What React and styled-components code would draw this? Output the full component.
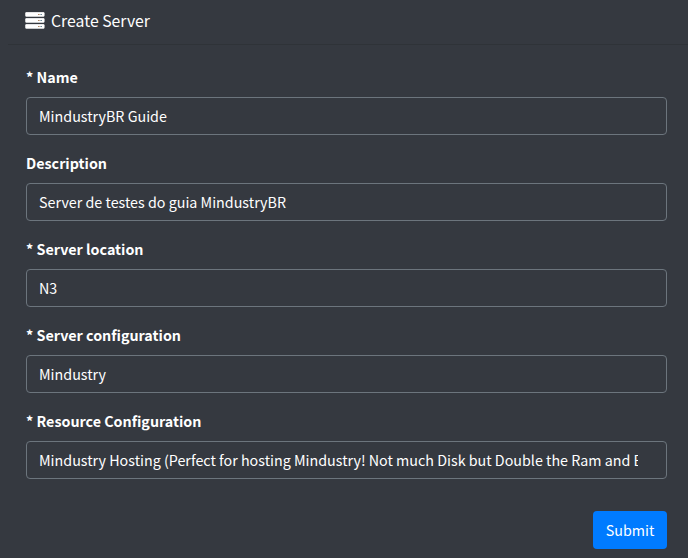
import React from "react";
import styled, { createGlobalStyle } from "styled-components";

const Global = createGlobalStyle`
  * { box-sizing: border-box; }
  body {
    margin: 0;
    background: #353940;
    color: #fff;
    font-family: "Source Sans Pro", "Noto Sans CJK SC", sans-serif;
    font-size: 14.3px;
    overflow: hidden;
  }
`;

const Card = styled.section`
  width: 680px;
  height: 558px;
  margin-left: 8px;
  background: #353940;
`;

const Header = styled.header`
  height: 45px;
  padding: 0 18px 0 17px;
  display: flex;
  align-items: flex-start;
  border-bottom: 1px solid #2f3338;
`;

const ServerIcon = styled.svg`
  width: 20px;
  height: 18px;
  margin-top: 12px;
  margin-right: 6px;
  flex: none;
`;

const Title = styled.h3`
  margin: 8px 0 0;
  font-size: 15.8px;
  line-height: 26px;
  font-weight: 400;
`;

const Form = styled.form`
  padding: 20px 21px 0 18px;
`;

const Field = styled.div`
  margin-bottom: 16px;
`;

const Label = styled.label`
  display: block;
  height: 24px;
  margin-bottom: 8px;
  line-height: 24px;
  font-weight: 700;
`;

const Input = styled.input`
  display: block;
  width: 100%;
  height: 38px;
  padding: 0 ${(p) => (p.$select ? 28 : 12)}px 2px 12px;
  border: 1px solid #6c757d;
  border-radius: 4px;
  background: #353940;
  color: #fff;
  font: inherit;
  outline: none;
`;

const Footer = styled.footer`
  display: flex;
  justify-content: flex-end;
  margin-top: 32px;
`;

const Submit = styled.button`
  width: 74px;
  height: 38px;
  padding: 0 0 2px;
  border: 0;
  border-radius: 4px;
  background: #007bff;
  color: #fff;
  font: inherit;
`;

const fields = [
  { label: "* Name", value: "MindustryBR Guide" },
  { label: "Description", value: "Server de testes do guia MindustryBR" },
  { label: "* Server location", value: "N3", select: true },
  { label: "* Server configuration", value: "Mindustry", select: true },
  {
    label: "* Resource Configuration",
    value: "Mindustry Hosting (Perfect for hosting Mindustry! Not much Disk but Double the Ram and Better CPU)",
    select: true,
  },
];

export default function App() {
  return (
    <>
      <Global />
      <Card>
        <Header>
          <ServerIcon viewBox="0 0 20 18" aria-hidden="true">
            {[0, 6, 12].map((y) => (
              <g key={y}>
                <rect x="0.4" y={y + 0.2} width="19" height="4.8" rx="1" fill="#b5b7ba" />
                <rect x="0.4" y={y + 0.2} width="19" height="4" rx="0.8" fill="#fff" />
                <rect x="13" y={y + 2} width="1.6" height="1" fill="#b08a68" />
                <rect x="15.4" y={y + 2} width="1.6" height="1" fill="#6f8a9a" />
              </g>
            ))}
          </ServerIcon>
          <Title>Create Server</Title>
        </Header>
        <Form onSubmit={(e) => e.preventDefault()}>
          {fields.map((f, i) => (
            <Field key={f.label}>
              <Label htmlFor={`field-${i}`}>{f.label}</Label>
              <Input id={`field-${i}`} defaultValue={f.value} $select={f.select} />
            </Field>
          ))}
          <Footer>
            <Submit type="submit">Submit</Submit>
          </Footer>
        </Form>
      </Card>
    </>
  );
}
